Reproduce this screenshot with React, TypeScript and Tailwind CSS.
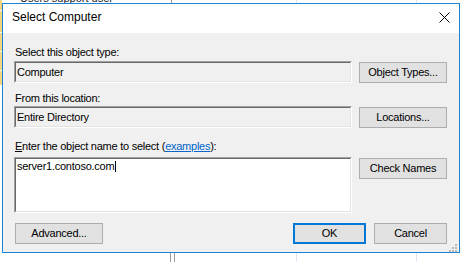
import type { ReactNode } from "react";

const Btn = ({ children, className = "" }: { children: ReactNode; className?: string }) => {
  return (
    <div
      className={`flex h-[21px] items-center justify-center border border-[#adadad] bg-[#e1e1e1] text-black ${className}`}
    >
      {children}
    </div>
  );
};

const Field = ({ children, className = "" }: { children?: ReactNode; className?: string }) => {
  return (
    <div
      className={`border border-t-[#a0a0a0] border-l-[#a0a0a0] border-b-white border-r-white ${className}`}
    >
      <div className="h-full border border-t-[#696969] border-l-[#696969] border-b-[#e3e3e3] border-r-[#e3e3e3] pl-px">
        {children}
      </div>
    </div>
  );
};

const App = () => {
  return (
    <div className="relative h-[262px] w-[468px] overflow-hidden bg-white font-['Liberation_Sans',Arial,sans-serif] text-black">
      {/* window behind the dialog */}
      <div className="absolute left-[20px] top-[-8px] text-[11px] leading-[13px] text-[#222]">
        Users support user
      </div>
      <div className="absolute left-0 top-0 flex h-[86px] w-[2px] flex-col gap-px">
        <div className="h-[10px] bg-[#f3d47c]" />
        <div className="h-[21px] bg-[#f3d47c]" />
        <div className="h-[18px] bg-[#f3d47c]" />
        <div className="h-[18px] bg-[#f3d47c]" />
        <div className="h-[14px] bg-[#f3d47c]" />
      </div>
      <div className="absolute left-[171px] top-0 h-[4px] w-px bg-[#a0a0a0]" />
      <div className="absolute left-[296px] top-0 h-[4px] w-px bg-[#dde5ee]" />
      <div className="absolute left-[416px] top-0 h-[4px] w-px bg-[#dde5ee]" />
      <div className="absolute left-[170px] top-[253px] h-[9px] w-px bg-[#a0a0a0]" />
      <div className="absolute left-[174px] top-[253px] h-[9px] w-px bg-[#a0a0a0]" />
      <div className="absolute left-[296px] top-[253px] h-[9px] w-px bg-[#dde5ee]" />
      <div className="absolute left-[416px] top-[253px] h-[9px] w-px bg-[#dde5ee]" />

      {/* dialog */}
      <div className="absolute left-[2px] top-[3px] flex h-[250px] w-[458px] flex-col border border-[#1883d7] bg-[#f0f0f0]">
        <div className="flex h-[29px] items-start justify-between bg-white">
          <div className="pl-[9px] pt-[5px] text-[12px] leading-[16px]">Select Computer</div>
          <svg width="11" height="11" viewBox="0 0 11 11" className="mr-[9px] mt-[8px]">
            <path d="M0.5 0.5 L10.5 10.5 M10.5 0.5 L0.5 10.5" stroke="#000" strokeWidth="1" fill="none" />
          </svg>
        </div>

        <div className="flex flex-1 flex-col pl-[11px] pr-[12px] pt-[13px] text-[11px] leading-[13px] tracking-[-0.25px]">
          <div className="pl-px">Select this object type:</div>
          <div className="mt-[2px] flex items-center gap-[7px]">
            <Field className="h-[22px] w-[338px]">
              <div className="pt-[3px]">Computer</div>
            </Field>
            <Btn className="w-[88px]">Object Types...</Btn>
          </div>

          <div className="mt-[9px] pl-px">From this location:</div>
          <div className="mt-px flex items-center gap-[7px]">
            <Field className="h-[22px] w-[338px]">
              <div className="pt-[3px]">Entire Directory</div>
            </Field>
            <Btn className="w-[88px]">Locations...</Btn>
          </div>

          <div className="mt-[12px] pl-px">
            <span className="underline">E</span>nter the object name to select (
            <span className="text-[#0066cc] underline">examples</span>):
          </div>
          <div className="mt-[4px] flex items-start gap-[7px]">
            <Field className="h-[56px] w-[338px] bg-white">
              <div className="flex items-start pt-px">
                <span>server1.contoso.com</span>
                <span className="ml-px mt-px h-[11px] w-px bg-black" />
              </div>
            </Field>
            <Btn className="mt-px w-[88px]">Check Names</Btn>
          </div>

          <div className="mt-[10px] flex items-center">
            <Btn className="ml-px w-[88px]">Advanced...</Btn>
            <div className="flex-1" />
            <div className="flex h-[21px] w-[73px] items-center justify-center border-2 border-[#0078d7] bg-[#e1e1e1]">
              OK
            </div>
            <Btn className="ml-[8px] w-[73px]">Cancel</Btn>
          </div>
        </div>

        <svg width="8" height="8" viewBox="0 0 8 8" className="absolute bottom-0 right-[2px]">
          <rect x="6" y="0" width="2" height="2" fill="#b8b8b8" />
          <rect x="3" y="3" width="2" height="2" fill="#b8b8b8" />
          <rect x="6" y="3" width="2" height="2" fill="#b8b8b8" />
          <rect x="0" y="6" width="2" height="2" fill="#b8b8b8" />
          <rect x="3" y="6" width="2" height="2" fill="#b8b8b8" />
          <rect x="6" y="6" width="2" height="2" fill="#b8b8b8" />
        </svg>
      </div>
    </div>
  );
};

export default App;
